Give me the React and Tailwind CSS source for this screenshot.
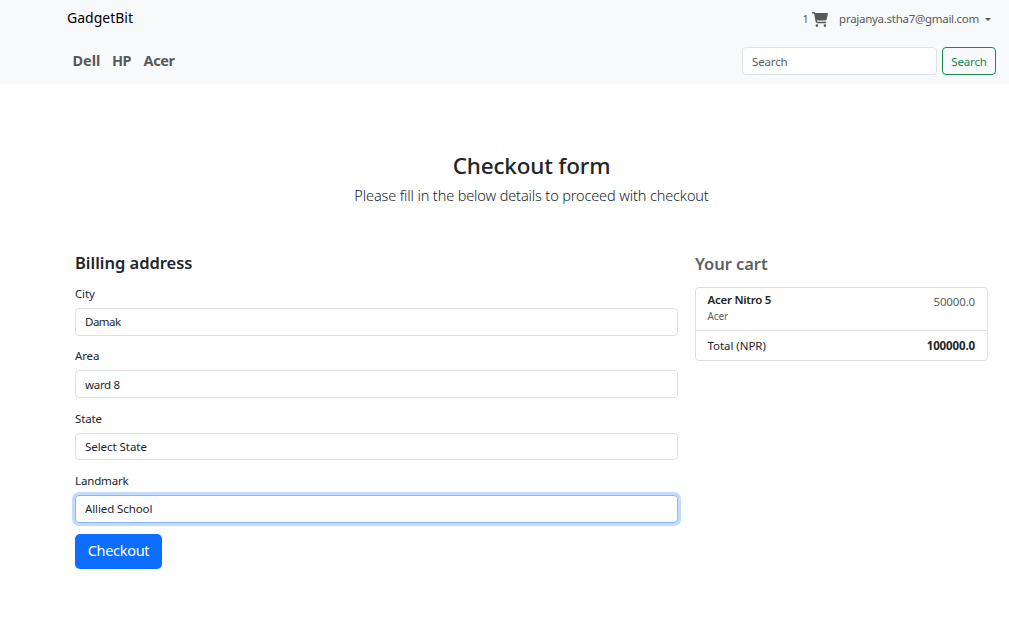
import React from "react";

const brands = [
  { name: "Dell", cls: "w-[28px] tracking-[-0.05px]" },
  { name: "HP", cls: "w-[20px] tracking-[-0.5px]" },
  { name: "Acer", cls: "w-[32px] tracking-[-0.35px]" },
];

function CartIcon() {
  return (
    <svg viewBox="0 0 576 512" className="h-[15px] w-[16px] fill-[#595959]" preserveAspectRatio="none">
      <path d="M0 24C0 10.700 10.700 0 24 0H69.500c22 0 41.500 12.800 50.600 32h411c26.300 0 45.500 25 38.600 50.400l-41 152.300c-8.500 31.400-37 53.300-69.500 53.300H170.700l5.400 28.500c2.200 11.300 12.100 19.500 23.600 19.500H488c13.300 0 24 10.700 24 24s-10.700 24-24 24H199.700c-34.600 0-64.300-24.600-70.700-58.500L77.400 54.500c-.7-3.800-4-6.500-7.900-6.500H24C10.700 48 0 37.300 0 24zM128 464a48 48 0 1 1 96 0 48 48 0 1 1-96 0zm336-48a48 48 0 1 1 0 96 48 48 0 1 1 0-96z" />
    </svg>
  );
}

function Header() {
  return (
    <header className="h-[84px] bg-[#f8f9fb] pl-[67px]">
      <div className="flex h-[37px] items-center justify-between pr-[18px]">
        <a className="pb-[2px] text-[14px] leading-[20px] tracking-normal text-black">GadgetBit</a>
        <div className="flex items-center pt-px text-[#595959]">
          <span className="w-[9px] text-[11px]">1</span>
          <CartIcon />
          <span className="ml-[11.5px] text-[11.5px] leading-[18px] tracking-[-0.28px] whitespace-nowrap">prajanya.stha7@gmail.com</span>
          <span className="ml-[6px] mt-px border-x-[3px] border-t-[3px] border-x-transparent border-t-[#595959]" />
        </div>
      </div>
      <div className="flex items-center justify-between pt-[10px] pr-[13px] pl-[5.5px]">
        <nav className="flex gap-[11.5px] text-[14.500px] font-bold whitespace-nowrap text-[#595959]">
          {brands.map((b) => (
            <a key={b.name} className={b.cls}>{b.name}</a>
          ))}
        </nav>
        <form className="flex gap-[5px]">
          <input
            placeholder="Search"
            className="h-[28px] w-[195px] rounded-[4px] border border-[#dee2e6] bg-white px-[9px] text-[11.5px] tracking-[-0.15px] text-[#212529] outline-none placeholder:text-[#595c5f]"
          />
          <button type="button" className="h-[28px] w-[54px] rounded-[4px] border border-[#198754] pt-[2px] text-[11.5px] tracking-[-0.15px] text-[#198754]">
            Search
          </button>
        </form>
      </div>
    </header>
  );
}

function Field({ label, children, className }) {
  return (
    <label className={"block " + className}>
      <span className="block h-[23px] text-[11.5px] leading-[18px] tracking-[-0.15px]">{label}</span>
      {children}
    </label>
  );
}

const control =
  "block w-full rounded-[4px] border bg-white px-[9px] text-[11.5px] text-[#212529] outline-none appearance-none";

function BillingForm() {
  return (
    <form className="w-[603px]">
      <h4 className="h-[33px] text-[16.500px] leading-[22px] font-semibold tracking-[-0.02px]">Billing address</h4>
      <Field label="City" className="h-[62px]">
        <input defaultValue="Damak" className={control + " h-[28px] border-[#dee2e6] pb-[2px] tracking-[-0.5px]"} />
      </Field>
      <Field label="Area" className="h-[63px]">
        <input defaultValue="ward 8" className={control + " h-[28px] border-[#dee2e6] tracking-[-0.3px]"} />
      </Field>
      <Field label="State" className="h-[62px]">
        <select className={control + " h-[27px] border-[#dee2e6] tracking-[-0.05px]"}>
          <option>Select State</option>
        </select>
      </Field>
      <Field label="Landmark" className="h-[62px]">
        <input
          defaultValue="Allied School"
          className={control + " h-[28px] border-[#86b7fe] pb-[2px] tracking-[-0.1px] shadow-[0_0_0_3px_#c2dbfe]"}
        />
      </Field>
      <button type="button" className="h-[35px] w-[87px] rounded-[5px] bg-[#0d6efd] pb-[2px] text-[14.500px] tracking-[-0.3px] text-white">
        Checkout
      </button>
    </form>
  );
}

function Cart() {
  return (
    <aside className="w-[293px]">
      <h4 className="h-[35px] pt-px text-[16.500px] leading-[22px] font-semibold tracking-[-0.05px] text-[#5c6064]">Your cart</h4>
      <ul className="rounded-[4px] border border-[#dee2e6] text-[11.5px]">
        <li className="flex h-[43px] justify-between border-b border-[#dee2e6] px-[12px]">
          <div className="-ml-[0.5px]">
            <h6 className="pt-[4px] text-[11.5px] leading-[16px] font-semibold tracking-[-0.25px]">Acer Nitro 5</h6>
            <small className="block text-[10px] leading-[17px] tracking-[-0.1px] text-[#5c6064]">Acer</small>
          </div>
          <span className="pt-[6px] leading-[16px] tracking-[-0.15px] text-[#5c6064]">50000.0</span>
        </li>
        <li className="flex h-[29px] items-center justify-between px-[12px] leading-[16px]">
          <span className="-ml-[0.5px] tracking-[-0.05px]">Total (NPR)</span>
          <strong className="font-bold tracking-[-0.12px]">100000.0</strong>
        </li>
      </ul>
    </aside>
  );
}

export default function App() {
  return (
    <div className="min-h-[638px] bg-white font-['Noto_Sans',sans-serif] text-[#212529]">
      <Header />
      <main className="pl-[75px]">
        <div className="h-[168px] w-[913px] pt-[67px] text-center">
          <h2 className="text-[22.500px] leading-[30px] font-medium tracking-[-0.18px]">Checkout form</h2>
          <p className="pt-[3px] text-[14.500px] leading-[22px] font-light tracking-[-0.13px]">
            Please fill in the below details to proceed with checkout
          </p>
        </div>
        <div className="flex gap-[17px]">
          <BillingForm />
          <Cart />
        </div>
      </main>
    </div>
  );
}
